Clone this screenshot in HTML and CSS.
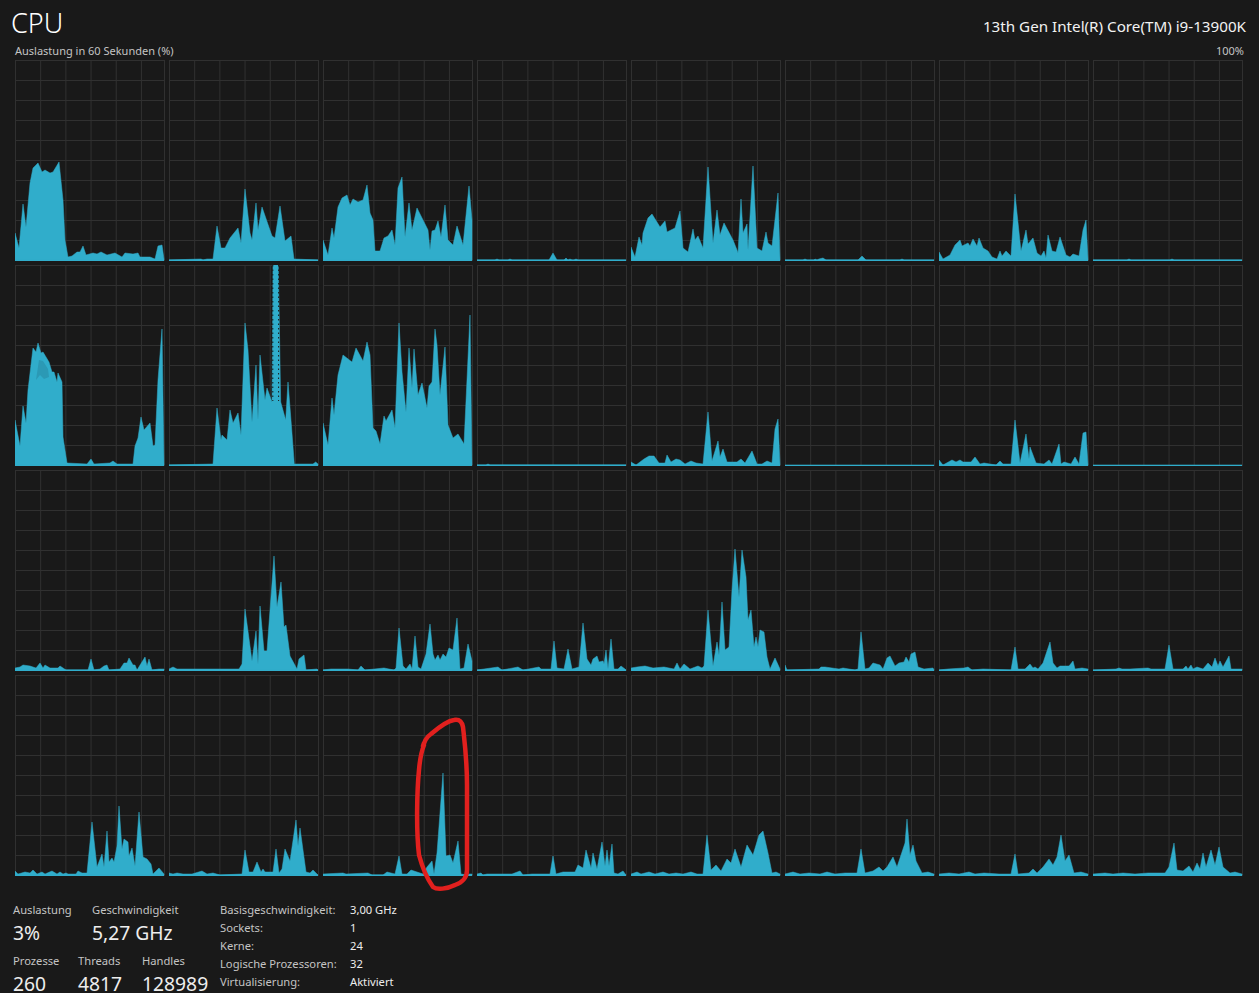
FILE: index.html
```html
<!DOCTYPE html>
<html lang="de">
<head>
<meta charset="utf-8">
<title>CPU</title>
<link rel="stylesheet" href="styles.css">
</head>
<body>
<main class="page">
  <header class="head">
    <h1 class="title">CPU</h1>
    <div class="model">13th Gen Intel(R) Core(TM) i9-13900K</div>
  </header>
  <div class="axis"><span>Auslastung in 60 Sekunden (%)</span><span>100%</span></div>
  <section class="grid">
    <div class="cell"><svg class="plot" viewBox="0 -200 150 201"><polygon points="0,0 0,-27 4,-12 8,-56 11,-33 15,-77 18,-92 23,-97 27,-88 30,-90 35,-87 38,-88 44,-98 48,-60 50,-20 53,-3 57,-4 62,-8 65,-8 68,-14 71,-5 78,-7 82,-6 86,-8 92,-5 100,-7 107,-3 110,-7 118,-6 123,-7 125,-3 135,-3 140,-1 143,-14 147,-15 149,-1 149,0"/><rect x="0" y="-0.3" width="149" height="1.3"/></svg></div>
    <div class="cell"><svg class="plot" viewBox="0 -200 150 201"><polygon points="0,0 32,-1 34,0 38,-1 44,-1 48,-34 52,-12 56,-12 61,-22 69,-32 72,-17 76,-71 81,-27 83,-20 87,-57 89,-30 93,-53 103,-24 106,-22 111,-54 116,-19 122,-24 125,-1 149,0"/><rect x="0" y="-0.3" width="149" height="1.3"/></svg></div>
    <div class="cell"><svg class="plot" viewBox="0 -200 150 201"><polygon points="0,0 0,-20 5,-5 9,-32 11,-22 15,-53 19,-62 24,-65 27,-55 30,-61 35,-58 40,-60 44,-75 47,-47 50,-40 52,-9 57,-9 61,-22 65,-24 69,-30 72,-15 75,-72 79,-83 82,-23 86,-57 89,-30 94,-52 105,-30 107,-10 109,-29 112,-30 115,-39 118,-23 122,-55 125,-20 130,-15 134,-34 140,-15 146,-74 149,-40 149,0"/><rect x="0" y="-0.3" width="149" height="1.3"/></svg></div>
    <div class="cell"><svg class="plot" viewBox="0 -200 150 201"><polygon points="0,0 18,0 20,-1 22,0 31,0 33,-1 35,0 72,0 76,-7 80,0 87,0 89,-2 91,0 93,-1 95,0 97,0 99,-1 101,0 149,0"/><rect x="0" y="-0.3" width="149" height="1.3"/></svg></div>
    <div class="cell"><svg class="plot" viewBox="0 -200 150 201"><polygon points="0,0 0,-13 4,-3 8,-23 11,-15 12,-27 17,-42 21,-46 29,-33 34,-39 36,-28 44,-32 49,-49 52,-12 57,-8 62,-31 64,-20 67,-24 72,-12 77,-93 82,-17 86,-50 89,-25 93,-37 102,-20 106,-10 107,-7 110,-61 112,-27 116,-36 117,-10 122,-94 126,-12 131,-9 135,-28 137,-17 141,-14 147,-67 149,-1 149,0"/><rect x="0" y="-0.3" width="149" height="1.3"/></svg></div>
    <div class="cell"><svg class="plot" viewBox="0 -200 150 201"><polygon points="0,0 18,0 20,-1 22,0 29,0 30,-1 32,0 34,-1 38,-2 41,0 73,0 77,-4 81,0 115,0 117,-1 119,0 149,0"/><rect x="0" y="-0.3" width="149" height="1.3"/></svg></div>
    <div class="cell"><svg class="plot" viewBox="0 -200 150 201"><polygon points="0,0 0,-8 4,-1 11,-5 16,-15 21,-20 23,-14 29,-17 31,-14 34,-21 38,-14 40,-22 44,-12 49,-9 53,-3 58,-1 61,-9 63,-4 67,-9 72,-4 76,-66 82,-9 87,-30 89,-16 94,-22 98,-7 102,-4 105,-9 107,-2 109,-25 113,-9 117,-8 121,-23 127,-5 131,-3 134,-6 140,-4 144,-30 147,-40 149,-1 149,0"/><rect x="0" y="-0.3" width="149" height="1.3"/></svg></div>
    <div class="cell"><svg class="plot" viewBox="0 -200 150 201"><polygon points="0,0 34,0 36,-1 38,0 77,0 79,-1 81,0 149,0"/><rect x="0" y="-0.3" width="149" height="1.3"/></svg></div>

    <div class="cell"><svg class="plot" viewBox="0 -200 150 201"><polygon points="0,0 0,-45 5,-19 8,-59 11,-42 13,-75 18,-117 21,-113 23,-122 26,-112 28,-113 34,-103 37,-93 39,-93 42,-83 43,-92 47,-83 48,-28 52,-2 72,-1 76,-6 79,-1 95,-2 98,-4 102,-1 118,-1 120,-19 123,-27 126,-48 129,-35 135,-42 138,-19 140,-20 143,-85 147,-136 149,-1 149,0"/><polygon class="shade" points="21,-85 24,-105 28,-104 33,-96 34,-88 29,-86 25,-90"/><rect x="0" y="-0.3" width="149" height="1.3"/></svg></div>
    <div class="cell"><svg class="plot" viewBox="0 -200 150 201"><polygon points="0,0 44,-1 48,-57 52,-25 53,-30 58,-25 61,-55 64,-42 69,-52 72,-30 76,-142 79,-115 83,-43 87,-100 89,-45 91,-110 96,-65 98,-77 103,-63 104,-200 109.3,-200 111.7,-63 116.7,-45 119,-83 122.6,-37 125.3,-1 144,-1 146.7,-3 149,-1 149,0"/><path class="beads" d="M103.8 -200V-64M109.6 -200V-64"/><rect x="0" y="-0.3" width="149" height="1.3"/></svg></div>
    <div class="cell"><svg class="plot" viewBox="0 -200 150 201"><polygon points="0,0 0,-42 5,-20 9,-67 11,-50 15,-90 20,-110 29,-103 33,-117 40,-104 44,-123 47,-110 50,-37 53,-34 57,-21 61,-49 63,-44 69,-55 72,-37 76,-142 79,-93 83,-53 86,-117 89,-77 91,-116 95,-70 99,-82 104,-57 106,-79 109,-83 112,-136 114,-120 117,-70 122,-118 125,-40 130,-27 135,-31 141,-21 147,-150 149,-1 149,0"/><rect x="0" y="-0.3" width="149" height="1.3"/></svg></div>
    <div class="cell"><svg class="plot" viewBox="0 -200 150 201"><polygon points="0,0 9,0 11,-1 13,0 149,0"/><rect x="0" y="-0.3" width="149" height="1.3"/></svg></div>
    <div class="cell"><svg class="plot" viewBox="0 -200 150 201"><polygon points="0,0 0,-3 5,0 13,-6 18,-9 23,-9 28,-2 34,-2 36,-10 40,-3 45,-6 49,-5 54,-1 60,-4 65,-2 72,-1 77,-53 81,-4 87,-24 89,-8 92,-16 96,-3 106,-3 110,-6 114,-2 121,-14 126,-1 131,-1 136,-4 141,-2 144,-36 147,-46 149,0"/><rect x="0" y="-0.3" width="149" height="1.3"/></svg></div>
    <div class="cell"><svg class="plot" viewBox="0 -200 150 201"><rect x="0" y="-0.3" width="149" height="1.3"/></svg></div>
    <div class="cell"><svg class="plot" viewBox="0 -200 150 201"><polygon points="0,0 0,-5 4,0 13,-5 17,-3 21,-5 24,-3 32,-3 36,-8 41,-1 45,-2 57,0 61,-4 64,-1 72,-1 76,-45 81,-2 87,-31 90,-6 91,-18 97,-2 105,-1 110,-5 113,-1 120,-21 122,-1 125,-3 132,-1 136,-8 140,-1 144,-32 147,-33 149,0"/><rect x="0" y="-0.3" width="149" height="1.3"/></svg></div>
    <div class="cell"><svg class="plot" viewBox="0 -200 150 201"><rect x="0" y="-0.3" width="149" height="1.3"/></svg></div>

    <div class="cell"><svg class="plot" viewBox="0 -200 150 201"><polygon points="0,0 0,-2 5,-3 8,-5 15,-4 21,-2 25,-7 28,-2 30,-5 35,-2 43,-2 45,-4 51,0 73,0 76,-11 79,0 85,-1 89,-4 92,-5 94,0 105,-1 109,-7 112,-7 114,-12 118,-5 120,-5 122,0 130,-13 132,-4 134,-11 137,0 144,-1 149,-1 149,0"/><rect x="0" y="-0.3" width="149" height="1.3"/></svg></div>
    <div class="cell"><svg class="plot" viewBox="0 -200 150 201"><polygon points="0,0 0,-1 4,-3 8,-1 70,-1 73,-6 76,-61 83,-9 87,-39 89,-6 91,-64 95,-19 98,-19 105,-114 108,-63 112,-88 115,-43 117,-45 121,-14 128,-1 130,-11 135,-15 137,0 148,-1 149,0"/><rect x="0" y="-0.3" width="149" height="1.3"/></svg></div>
    <div class="cell"><svg class="plot" viewBox="0 -200 150 201"><polygon points="0,0 8,-1 15,-1 25,-1 35,0 38,-4 42,0 61,-2 71,0 73,-2 76,-42 80,-4 83,-1 87,-6 89,-1 92,-34 95,-3 98,-1 103,-16 107,-46 110,-16 112,-10 115,-15 117,-10 120,-16 123,-13 126,-22 130,-20 134,-52 137,-1 141,-2 145,-26 149,-9 149,0"/><rect x="0" y="-0.3" width="149" height="1.3"/></svg></div>
    <div class="cell"><svg class="plot" viewBox="0 -200 150 201"><polygon points="0,0 21,-3 25,0 41,-3 46,0 62,-3 64,-1 74,-1 77,-29 80,-2 87,-1 91,-21 95,-1 102,-3 106,-47 110,-11 114,-5 116,-11 120,-14 122,-8 126,-9 127,-6 129,-20 131,-1 134,-31 137,-1 141,-1 144,-4 148,-1 149,0"/><rect x="0" y="-0.3" width="149" height="1.3"/></svg></div>
    <div class="cell"><svg class="plot" viewBox="0 -200 150 201"><polygon points="0,0 0,-2 6,-3 14,-4 22,-2 33,-3 43,-1 46,-7 49,-1 53,-6 59,-1 67,-4 71,-2 73,-4 77,-60 82,-4 86,-28 88,-15 91,-68 94,-20 98,-23 101,-80 104,-121 108,-73 111,-120 115,-93 117,-50 120,-60 123,-23 125,-33 127,-23 129,-40 133,-38 136,-13 139,-1 144,-12 149,-1 149,0"/><rect x="0" y="-0.3" width="149" height="1.3"/></svg></div>
    <div class="cell"><svg class="plot" viewBox="0 -200 150 201"><polygon points="0,0 0,-5 2,0 34,-1 36,-3 40,-3 54,-1 58,-2 70,0 73,-1 76,-38 80,-1 84,-2 88,-7 95,-5 98,-1 102,-12 105,-14 110,-4 114,-7 119,-8 121,-13 124,-8 126,-16 130,-18 133,-3 139,-1 148,-2 149,0"/><rect x="0" y="-0.3" width="149" height="1.3"/></svg></div>
    <div class="cell"><svg class="plot" viewBox="0 -200 150 201"><polygon points="0,0 9,-1 25,-2 29,-3 33,0 44,-1 72,0 76,-23 79,-1 86,-1 91,-6 94,-2 96,-3 99,-1 104,-7 107,-16 111,-28 114,-7 118,-2 121,-4 130,-4 134,-9 136,-1 143,-2 149,-1 149,0"/><rect x="0" y="-0.3" width="149" height="1.3"/></svg></div>
    <div class="cell"><svg class="plot" viewBox="0 -200 150 201"><polygon points="0,0 23,-1 26,-2 29,-1 37,-1 55,-2 58,-1 72,-1 76,-25 80,-1 90,-1 93,-4 95,-1 98,-5 100,-1 104,-3 110,-1 115,-7 119,-3 122,-12 125,-4 127,-9 130,-3 136,-14 138,-1 149,-1 149,0"/><rect x="0" y="-0.3" width="149" height="1.3"/></svg></div>

    <div class="cell"><svg class="plot" viewBox="0 -200 150 201"><polygon points="0,0 0,-4 3,-1 10,-3 15,-2 18,-5 22,-1 27,-3 30,-1 37,-4 42,-1 45,-3 48,-1 51,-2 53,-1 61,-1 63,-4 67,-2 72,-2 77,-53 82,-8 87,-21 89,-8 92,-44 94,-13 97,-17 99,-13 102,-29 104,-69 107,-26 109,-36 113,-33 114,-19 117,-27 120,-9 124,-63 128,-18 132,-16 136,-11 138,-1 144,-7 149,-1 149,0"/><rect x="0" y="-0.3" width="149" height="1.3"/></svg></div>
    <div class="cell"><svg class="plot" viewBox="0 -200 150 201"><polygon points="0,0 0,-2 4,-1 8,-2 14,-1 23,-1 33,-4 38,-1 44,-2 51,0 73,-1 76,-25 80,-3 84,-3 88,-13 92,-3 94,-6 96,-3 104,-3 107,-26 110,-2 113,-6 116,-26 121,-14 127,-55 129,-29 131,-47 137,-3 141,-2 144,-5 148,-1 149,0"/><rect x="0" y="-0.3" width="149" height="1.3"/></svg></div>
    <div class="cell"><svg class="plot" viewBox="0 -200 150 201"><polygon points="0,0 0,-1 20,-2 23,-1 45,-2 49,0 60,0 64,-3 72,-1 76,-19 79,-1 84,-1 88,-5 100,-1 104,-8 109,-14 111,-1 114,-22 120,-102 123,-19 127,-20 130,-12 135,-34 138,-1 144,0 146,-1 149,-1 149,0"/><rect x="0" y="-0.3" width="149" height="1.3"/></svg></div>
    <div class="cell"><svg class="plot" viewBox="0 -200 150 201"><polygon points="0,0 0,-1 4,-2 6,0 10,-1 20,-1 35,-1 43,-4 46,0 55,-1 73,-1 76,-19 79,-1 86,-3 98,-3 101,-10 106,-7 109,-25 114,-7 116,-22 120,-6 125,-33 128,-9 130,-25 132,-9 135,-31 137,-2 141,-1 146,-4 149,0"/><rect x="0" y="-0.3" width="149" height="1.3"/></svg></div>
    <div class="cell"><svg class="plot" viewBox="0 -200 150 201"><polygon points="0,0 0,-1 6,-3 10,-1 18,-3 24,-1 32,-3 38,-1 45,-2 52,-1 60,-3 66,-1 72,-1 76,-40 80,-5 85,-10 90,-4 96,-16 100,-12 104,-26 110,-8 116,-30 122,-20 128,-40 132,-44 137,-22 141,-2 145,-3 149,-1 149,0"/><rect x="0" y="-0.3" width="149" height="1.3"/></svg></div>
    <div class="cell"><svg class="plot" viewBox="0 -200 150 201"><polygon points="0,0 0,-1 8,-3 15,-1 24,-2 35,-1 42,-3 50,-1 60,-2 72,-2 76,-26 80,-2 88,-4 94,-8 98,-4 102,-8 108,-18 112,-8 116,-20 120,-32 122,-56 125,-20 128,-30 131,-14 137,-2 143,-3 149,-1 149,0"/><rect x="0" y="-0.3" width="149" height="1.3"/></svg></div>
    <div class="cell"><svg class="plot" viewBox="0 -200 150 201"><polygon points="0,0 0,-1 10,-2 20,-1 30,-3 36,-1 45,-2 60,-1 72,-1 76,-21 79,-1 90,-2 94,-6 98,-2 104,-8 110,-16 114,-10 118,-18 122,-40 126,-14 130,-20 135,-2 142,-3 149,-1 149,0"/><rect x="0" y="-0.3" width="149" height="1.3"/></svg></div>
    <div class="cell"><svg class="plot" viewBox="0 -200 150 201"><polygon points="0,0 0,-1 12,-2 20,-1 30,-2 42,-1 55,-2 72,-2 76,-8 81,-32 84,-5 90,-4 96,-9 100,-3 104,-12 107,-6 110,-22 113,-8 118,-25 122,-10 126,-28 130,-8 137,-2 142,-3 149,-1 149,0"/><rect x="0" y="-0.3" width="149" height="1.3"/></svg></div>
  </section>
  <footer class="foot">
    <div class="stats">
      <div class="stat-row">
        <div class="stat stat-load"><div class="label">Auslastung</div><div class="value">3%</div></div>
        <div class="stat"><div class="label">Geschwindigkeit</div><div class="value">5,27 GHz</div></div>
      </div>
      <div class="stat-row">
        <div class="stat stat-proc"><div class="label">Prozesse</div><div class="value">260</div></div>
        <div class="stat stat-thr"><div class="label">Threads</div><div class="value">4817</div></div>
        <div class="stat"><div class="label">Handles</div><div class="value">128989</div></div>
      </div>
    </div>
    <dl class="specs">
      <dt>Basisgeschwindigkeit:</dt><dd>3,00 GHz</dd>
      <dt>Sockets:</dt><dd>1</dd>
      <dt>Kerne:</dt><dd>24</dd>
      <dt>Logische Prozessoren:</dt><dd>32</dd>
      <dt>Virtualisierung:</dt><dd>Aktiviert</dd>
    </dl>
  </footer>
  <svg class="marker" viewBox="0 0 1259 993"><path d="M423 748C424 741 428 736 431 734C438 728 447 721 454 720C460 719 462 722 463 727C465 745 467 760 467 785L467 870C467 878 463 882 455 885C447 889 437 890 433 887C428 880 423 870 419 855C416 830 417 790 419 770C420 758 422 750 424 745M424 743L423 746"/></svg>
</main>
</body>
</html>
```
FILE: styles.css
```css
* { box-sizing: border-box; }
html, body { margin: 0; height: 100%; background: #191919; overflow: hidden; }
body { font-family: "Noto Sans", "Open Sans", "Liberation Sans", sans-serif; color: #c9c9c9; }
.page { position: relative; width: 1259px; height: 993px; padding: 0 13px 0 15px; overflow: hidden; }

.head { display: flex; justify-content: space-between; align-items: flex-start; height: 44px; }
.title { margin: 5px 0 0 -4px; font-size: 27px; line-height: 36px; font-weight: 300; color: #fff; }
.model { margin: 15px 0 0; font-size: 15.2px; line-height: 22px; color: #f2f2f2; }

.axis { display: flex; justify-content: space-between; height: 16px; font-size: 11px; line-height: 14px; color: #c4c4c4; padding-right: 2px; }

.grid { display: grid; grid-template-columns: repeat(8, 150px); grid-auto-rows: 201px; gap: 4px; }
.cell {
  border-right: 1px solid #303030;
  background-color: #191919;
  background-image: linear-gradient(#303030 1px, transparent 1px), linear-gradient(90deg, #303030 1px, transparent 1px);
  background-size: 100% 20px, 25.2px 100%;
}
.plot { display: block; width: 150px; height: 201px; margin-right: -1px; fill: #30adcb; }
.plot polygon { stroke: #30adcb; stroke-width: 0.5; stroke-linejoin: round; }
.plot .shade { fill: #2b99b5; stroke: none; }
.beads { fill: none; stroke: #191919; stroke-width: 1; stroke-dasharray: 1.5 3; }

.foot { display: flex; margin: 25px 0 0 -2px; }
.stats { width: 207px; flex: none; }
.stat-row { display: flex; height: 51px; }
.stat-load { width: 79px; }
.stat-proc { width: 65px; }
.stat-thr { width: 64px; }
.label { font-size: 11.2px; line-height: 18px; color: #c4c4c4; }
.value { margin-top: 5px; font-size: 19.3px; line-height: 18px; color: #ededed; white-space: nowrap; }

.specs { display: grid; grid-template-columns: 130px auto; grid-auto-rows: 18px; margin: 0; font-size: 11.2px; line-height: 18px; }
.specs dt { color: #c4c4c4; }
.specs dd { margin: 0; color: #ededed; }

.marker { position: absolute; top: 0; left: 0; width: 1259px; height: 993px; pointer-events: none; fill: none; stroke: #e2201e; stroke-width: 4.5; stroke-linecap: round; stroke-linejoin: round; }
```
